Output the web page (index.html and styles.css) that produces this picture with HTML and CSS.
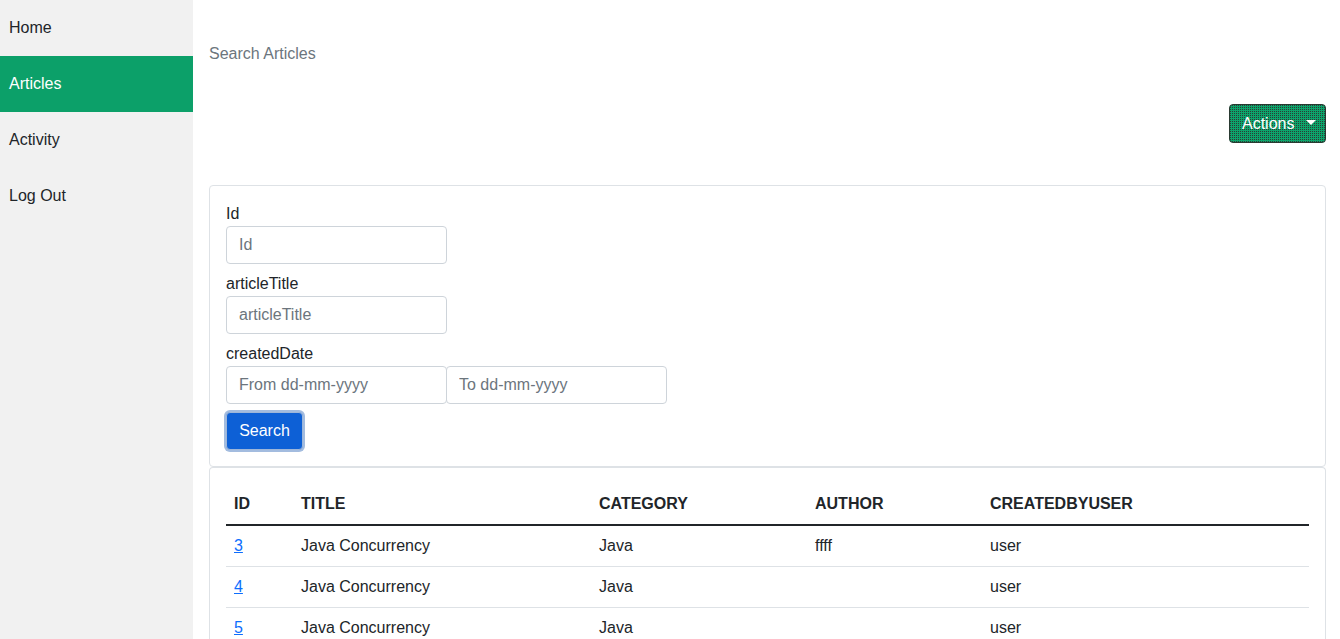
FILE: index.html
```html
<!DOCTYPE html>
<html>
<head>
<meta charset="utf-8">
<link rel="stylesheet" href="styles.css">
</head>
<body>
<div class="layout">
  <nav class="sidebar">
    <a class="nav-item" href="#">Home</a>
    <a class="nav-item active" href="#">Articles</a>
    <a class="nav-item" href="#">Activity</a>
    <a class="nav-item" href="#">Log Out</a>
  </nav>
  <main class="main">
    <div class="page-title">Search Articles</div>
    <div class="actions-row">
      <button class="btn-actions">Actions <span class="caret"></span></button>
    </div>
    <section class="card search-card">
      <label class="form-label">Id</label>
      <input class="form-input" placeholder="Id">
      <label class="form-label">articleTitle</label>
      <input class="form-input" placeholder="articleTitle">
      <label class="form-label">createdDate</label>
      <div class="date-row">
        <input class="form-input" placeholder="From dd-mm-yyyy">
        <input class="form-input date-to" placeholder="To dd-mm-yyyy">
      </div>
      <button class="btn-search">Search</button>
    </section>
    <section class="card table-card">
      <table class="table">
        <thead>
          <tr><th class="c-id">ID</th><th class="c-title">TITLE</th><th class="c-cat">CATEGORY</th><th class="c-author">AUTHOR</th><th>CREATEDBYUSER</th></tr>
        </thead>
        <tbody>
          <tr><td><a href="#">3</a></td><td>Java Concurrency</td><td>Java</td><td>ffff</td><td>user</td></tr>
          <tr><td><a href="#">4</a></td><td>Java Concurrency</td><td>Java</td><td></td><td>user</td></tr>
          <tr><td><a href="#">5</a></td><td>Java Concurrency</td><td>Java</td><td></td><td>user</td></tr>
        </tbody>
      </table>
    </section>
  </main>
</div>
</body>
</html>
```
FILE: styles.css
```css
* { box-sizing: border-box; }
html, body { margin: 0; padding: 0; }
body {
  font-family: "Liberation Sans", Arial, sans-serif;
  font-size: 16px;
  line-height: 24px;
  color: #212529;
  background: #fff;
  height: 639px;
  overflow: hidden;
}
.layout { display: flex; height: 639px; }
.sidebar {
  width: 193px;
  flex: 0 0 193px;
  background: #f1f1f1;
  display: flex;
  flex-direction: column;
}
.nav-item {
  display: block;
  height: 56px;
  line-height: 56px;
  padding-left: 9px;
  color: #212529;
  text-decoration: none;
}
.nav-item.active { background: #0ca069; color: #fff; }
.main {
  flex: 1;
  padding: 0 14px 0 16px;
  display: flex;
  flex-direction: column;
}
.page-title {
  padding-top: 42px;
  color: #6c757d;
}
.actions-row {
  display: flex;
  justify-content: flex-end;
  margin-top: 38px;
}
.btn-actions {
  width: 97px;
  height: 39px;
  background-color: #0ca56b;
  background-image: conic-gradient(from 270deg at 1px 1px, #2e3a34 0deg 90deg, transparent 90deg);
  background-size: 2px 2px;
  border: 1px solid #2a3a32;
  border-radius: 4px;
  color: #fff;
  font-family: inherit;
  font-size: 16px;
  padding: 0 12px;
  display: flex;
  align-items: center;
  gap: 8px;
}
.caret {
  width: 0; height: 0;
  border-left: 5px solid transparent;
  border-right: 5px solid transparent;
  border-top: 5px solid #fff;
  margin-left: 4px;
  margin-top: -2px;
}
.card {
  border: 1px solid #dee2e6;
  border-radius: 4px;
  padding: 16px;
}
.search-card {
  margin-top: 42px;
  display: flex;
  flex-direction: column;
  align-items: flex-start;
}
.form-label { display: block; height: 24px; flex-shrink: 0; }
.form-input {
  flex-shrink: 0;
  width: 221px;
  height: 38px;
  border: 1px solid #ced4da;
  border-radius: 4px;
  padding: 0 12px;
  font-family: inherit;
  font-size: 16px;
  color: #212529;
  margin: 0 0 8px 0;
}
.form-input::placeholder { color: #6c757d; }
.date-row { display: flex; }
.date-to { margin-left: -1px; }
.btn-search {
  flex-shrink: 0;
  height: 38px;
  width: 77px;
  background: #0d60d6;
  color: #fff;
  border: 1px solid #9db6d9;
  border-radius: 4px;
  box-shadow: 0 0 0 2px #a3bcdf;
  font-family: inherit;
  font-size: 16px;
  padding: 0;
}
.table-card { border-bottom: none; border-radius: 4px 4px 0 0; }
.table { width: 100%; border-collapse: collapse; }
.table th {
  text-align: left;
  font-weight: bold;
  padding: 8px 8px;
  border-bottom: 2px solid #212529;
}
.table td {
  padding: 8px 8px;
  border-bottom: 1px solid #dee2e6;
}
.c-id { width: 67px; }
.c-title { width: 298px; }
.c-cat { width: 216px; }
.c-author { width: 175px; }
.table a { color: #0d6efd; }
```
